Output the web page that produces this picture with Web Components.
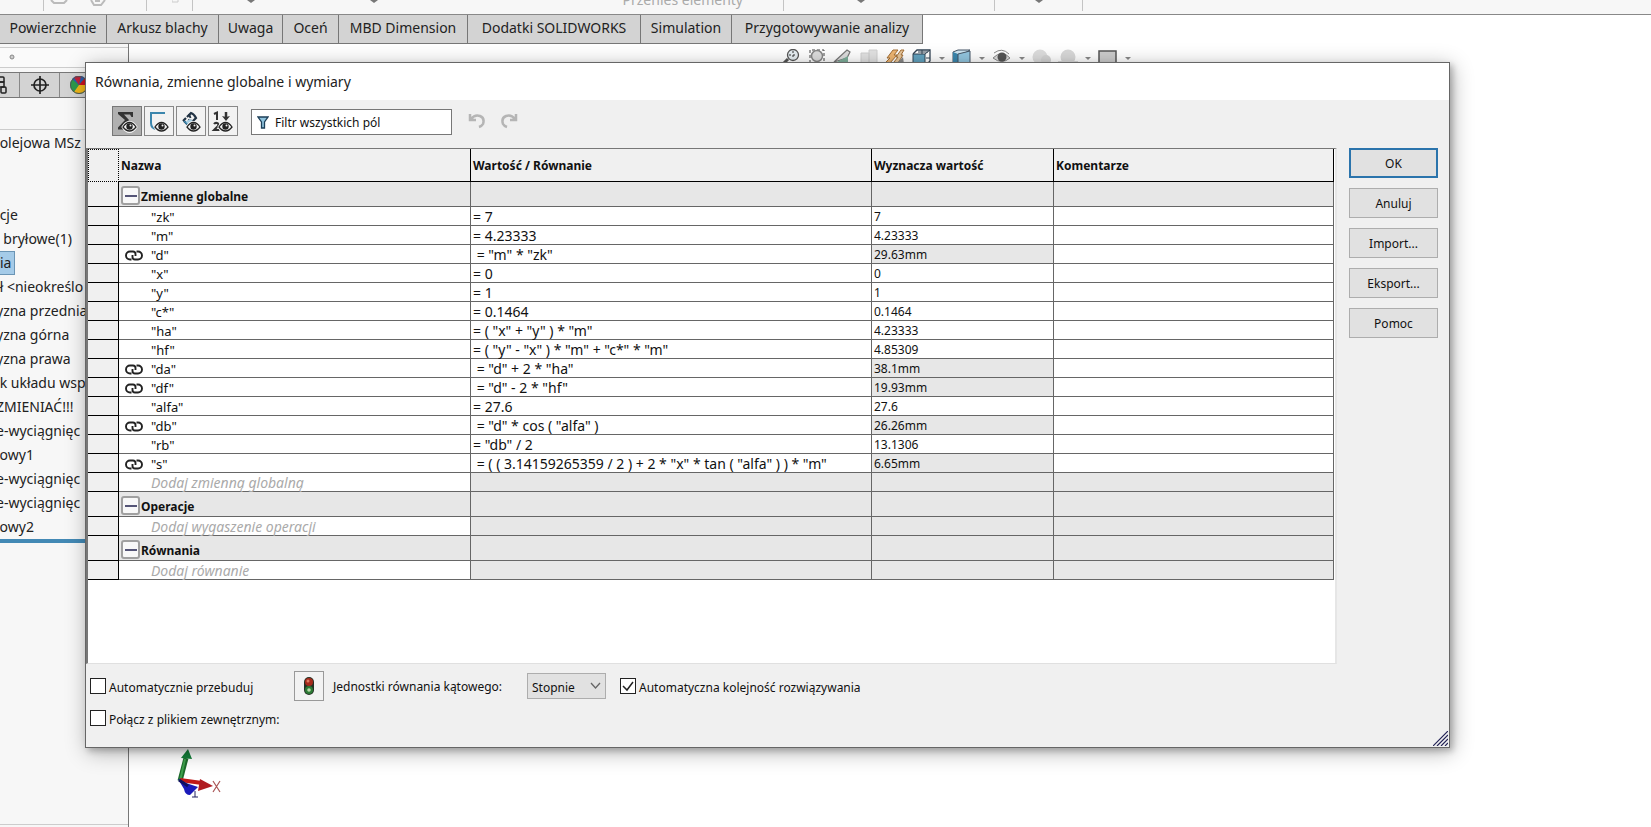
<!DOCTYPE html>
<html lang="pl">
<head>
<meta charset="utf-8">
<title>Równania, zmienne globalne i wymiary</title>
<style>
html,body{margin:0;height:100%}
body{font-family:"Noto Sans","Open Sans",sans-serif;font-size:12px;color:#111;background:#fff;overflow:hidden}
</style>
</head>
<body>
<cad-app></cad-app>
<script>
const define = (name, html, setup) => {
  const tpl = document.createElement('template');
  tpl.innerHTML = html;
  customElements.define(name, class extends HTMLElement {
    constructor() {
      super();
      this.attachShadow({mode: 'open'}).append(tpl.content.cloneNode(true));
    }
    connectedCallback() { if (setup) setup(this, this.shadowRoot); }
  });
};

const eye = `<g><path d="M9.500 20q3-5 7-5t7 5q-3 5-7 5t-7-5z" fill="#f4f4f4" stroke="#f4f4f4" stroke-width="2"/><path d="M10 20q3-4.500 6.500-4.500t6.500 4.500q-3 4-6.500 4t-6.500-4z" fill="#f4f4f4" stroke="#222" stroke-width="1.300"/><circle cx="16.500" cy="19.500" r="3.200" fill="#222"/><circle cx="17.500" cy="18.500" r="1" fill="#eee"/></g>`;

/* ---------- background application ---------- */
define('cad-ribbon', `
<style>
:host{display:flex;height:14px;background:#f7f7f7;border-bottom:1px solid #888;overflow:hidden}
div{box-sizing:border-box;height:11px;border-right:1px solid #c4c4c4;display:flex;align-items:flex-start}
.a{width:44px}.b{width:103px;padding-left:6px;gap:22px}.c{width:46px;justify-content:flex-end;padding-right:12px}.d{width:591px;padding:0 40px 0 54px;gap:115px}.e{width:211px;justify-content:center;padding-right:56px}.f{width:88px;justify-content:center}
svg{flex:none}
span{color:#aaa;font-size:14px;line-height:20px;align-self:flex-end;margin:0 0 1px auto}
</style>
<div class="a"></div>
<div class="b"><svg width="18" height="5"><path d="M1 0l3 3h10l3-3" fill="none" stroke="#bbb" stroke-width="2"/></svg><svg width="16" height="8"><path d="M1 0l3 5h7l4-5M5 1h5" fill="none" stroke="#bbb" stroke-width="2"/></svg></div>
<div class="c"><svg width="8" height="3"><path d="M0 0v2h6V0" fill="none" stroke="#ccc"/></svg></div>
<div class="d"><svg width="8" height="4"><path d="M0 0h8L4 3z" fill="#777"/></svg><svg width="8" height="4"><path d="M0 0h8L4 3z" fill="#777"/></svg><span>Przenieś elementy</span></div>
<div class="e"><svg width="8" height="4"><path d="M0 0h8L4 3z" fill="#777"/></svg></div>
<div class="f"><svg width="8" height="4"><path d="M0 0h8L4 3z" fill="#777"/></svg></div>`);

define('cad-tabs', `
<style>
:host{display:flex;height:28px;width:max-content;background:#d3d3d3;border-bottom:1px solid #777}
button{box-sizing:border-box;font:inherit;font-size:14px;line-height:26px;color:#222;background:none;border:0;border-right:1px solid #777;padding:0 0 2px;white-space:nowrap}
</style>
<button style="width:107px">Powierzchnie</button><button style="width:112px">Arkusz blachy</button><button style="width:64px">Uwaga</button><button style="width:56px">Oceń</button><button style="width:129px">MBD Dimension</button><button style="width:173px">Dodatki SOLIDWORKS</button><button style="width:91px">Simulation</button><button style="width:191px">Przygotowywanie analizy</button>`);

define('cad-tree', `
<style>
:host{display:flex;flex-direction:column;box-sizing:border-box;width:129px;background:#f7f7f7;border-right:1px solid #777;overflow:hidden}
.grip{height:19px;margin-top:3px;border:1px solid #ccc;border-width:1px 0;background:#fafafa}
.grip svg{display:block;margin:6px 0 0 9px}
.tabs{display:flex;height:24px;margin-top:4px;background:#d3d3d3;border:1px solid #777;border-width:1px 0}
.tabs button{box-sizing:border-box;width:40px;padding:0;border:0;border-right:1px solid #888;background:none;display:flex;align-items:center;justify-content:center}
.tabs button:first-child{width:20px;justify-content:flex-start}
.bar{height:31px;border-bottom:1px solid #ccc}
ul{list-style:none;margin:1px 0 0 -4px;padding:0;font-size:14px;color:#222}
li{height:24px;line-height:24px;white-space:pre}
.sel span{display:inline-block;box-sizing:border-box;background:#a5cbe8;border:1px solid #6b95b5;line-height:22px;padding:0 3px}
.end{height:4px;background:#4389b5}
.foot{margin-top:auto;height:2px;border-top:1px solid #ccc}
</style>
<div class="grip"><svg width="7" height="7"><circle cx="3" cy="3" r="2" fill="#ccc" stroke="#888"/></svg></div>
<div class="tabs"><button aria-label="Konfiguracje"><svg width="8" height="18"><g fill="none" stroke="#222" stroke-width="1.500"><rect x="-3" y="1" width="7" height="5" rx="1"/><rect x="-3" y="6" width="7" height="5"/><rect x="1" y="11" width="5" height="6" rx="1"/></g></svg></button><button aria-label="DimXpert"><svg width="18" height="18"><g fill="none" stroke="#222" stroke-width="1.700"><circle cx="9" cy="9" r="6"/><path d="M9 0v18M0 9h18"/></g></svg></button><button aria-label="Wygląd"><svg width="19" height="19"><circle cx="9" cy="9" r="9" fill="#2d9a4c"/><path d="M9 9L2 3A9 9 0 0 1 15 2z" fill="#2a5bb0"/><path d="M9 9L15 2A9 9 0 0 1 18 9z" fill="#c12"/><path d="M9 9L4 1.500A9 9 0 0 1 11 0z" fill="#c2213a"/><path d="M9 9h9a9 9 0 0 1-14 7z" fill="#f0b81a"/><circle cx="9" cy="9" r="8.500" fill="none" stroke="#555"/></svg></button></div>
<div class="bar"></div>
<ul></ul><div class="end"></div><div class="foot"></div>`, (el, root) => {
  const rows = [' olejowa MSz', '', '', ' cje', '  bryłowe(1)', '*ia', ' ł <nieokreślo', 'yzna przednia', 'yzna górna', 'yzna prawa', ' k układu wsp', 'ZMIENIAĆ!!!', 'e-wyciągnięc', 'łowy1', 'e-wyciągnięc', 'e-wyciągnięc', 'łowy2'];
  const ul = root.querySelector('ul');
  for (const r of rows) {
    const li = document.createElement('li');
    if (r[0] === '*') { li.className = 'sel'; const s = document.createElement('span'); s.textContent = r.slice(1); li.append(s); }
    else li.textContent = r;
    ul.append(li);
  }
});

define('cad-view-toolbar', `
<style>
:host{display:flex;align-items:flex-start;padding:5px 0 0 650px}
svg{flex:none;width:26px;height:18px}
svg.d{width:14px}
</style>
<svg viewBox="0 0 26 18"><circle cx="14" cy="6" r="5.500" fill="#e6eef2" stroke="#555" stroke-width="1.300"/><path d="M9 10l-5 5" stroke="#555" stroke-width="3"/><path d="M14 2v8M10 6h8" stroke="#333" stroke-dasharray="2 2"/></svg>
<svg viewBox="0 0 26 18"><path d="M5 14V1h14v13" fill="none" stroke="#444" stroke-dasharray="3 2"/><circle cx="12" cy="7" r="5.500" fill="#ddd" stroke="#888" stroke-width="1.500"/></svg>
<svg viewBox="0 0 26 18"><path d="M3 13L16 1l3 2-3 6z" fill="#ddd" stroke="#777" stroke-width="1.200"/><path d="M6 13l11-6v6z" fill="#7fb09c"/></svg>
<svg viewBox="0 0 26 18"><path d="M4 4h8v10H4zM12 1h8v13h-8z" fill="#e2e2e2" stroke="#d0d0d0"/></svg>
<svg viewBox="0 0 26 18"><path d="M3 13l4-4H4l6-8h5l-4 5h3l-7 8z" fill="#efb672" stroke="#a36e35"/><path d="M11 13l4-5h-2l5-7h3l-3 5h2l-5 8z" fill="#e8c79c" stroke="#a36e35"/><path d="M14 14l6-6 1 7z" fill="#888"/></svg>
<svg viewBox="0 0 26 18"><path d="M4 5l4-4h13v11l-4 4" fill="#fff" stroke="#345" stroke-width="1.300"/><path d="M4 5h12v10H4z" fill="#63a3c0" stroke="#345"/><path d="M16 5l5-4M13 1v4M9 3h10M17 9h4" stroke="#345"/></svg>
<svg class="d" viewBox="0 0 14 18"><path d="M4 8h6l-3 3z" fill="#888"/></svg>
<svg viewBox="0 0 26 18"><path d="M4 3l5-2h12l-5 3v11H4z" fill="#cfe6f2" stroke="#456"/><path d="M4 3l5 2v10H4z" fill="#3b87ae"/><path d="M9 5l12-3v13H9z" fill="#93c6e0" stroke="#456"/></svg>
<svg class="d" viewBox="0 0 14 18"><path d="M4 8h6l-3 3z" fill="#888"/></svg>
<svg viewBox="0 0 26 18"><path d="M4 9q9-9 17 0-8 7-17 0z" fill="#ddd" stroke="#888"/><circle cx="13" cy="8" r="4.500" fill="#555"/><path d="M5 4q8-6 15 1" fill="none" stroke="#888"/></svg>
<svg class="d" viewBox="0 0 14 18"><path d="M4 8h6l-3 3z" fill="#888"/></svg>
<svg viewBox="0 0 26 18"><circle cx="11" cy="8" r="7.500" fill="#ddd"/><circle cx="17" cy="11" r="5" fill="#d4d4d4"/></svg>
<svg viewBox="0 0 26 18"><circle cx="13" cy="8" r="7.500" fill="#d8d8d8"/><path d="M3 12h20v6H3z" fill="#dcdcdc"/></svg>
<svg class="d" viewBox="0 0 14 18"><path d="M4 8h6l-3 3z" fill="#888"/></svg>
<svg viewBox="0 0 26 18"><path d="M4 2h17v12H4z" fill="#ccc" stroke="#555" stroke-width="1.500"/></svg>
<svg class="d" viewBox="0 0 14 18"><path d="M4 8h6l-3 3z" fill="#888"/></svg>`);

define('cad-triad', `
<style>:host{display:block;margin:auto 0 24px 46px;height:54px}svg{display:block}</style>
<svg width="52" height="54"><path d="M5 32L11 9" stroke="#1d6b2b" stroke-width="5"/><path d="M5 32L10 10" stroke="#3ea04c" stroke-width="2"/><path d="M6 9L13 0l4 10z" fill="#15803a"/><path d="M5 31l22 3" stroke="#c01818" stroke-width="4"/><path d="M25 30l13 7-15 5z" fill="#b01c22"/><path d="M3 30l8 4 12 4-8 8q-5 0-6-6z" fill="#1a1aba"/><path d="M4 31l9 6" stroke="#101060" stroke-width="3"/><path d="M20 42v6M17 48h6" fill="none" stroke="#222260"/><path d="M38 32l7 11M45 32l-7 11" stroke="#a55" stroke-width="1.200"/></svg>`);

define('cad-app', `
<style>
:host{display:flex;flex-direction:column;height:100vh;position:relative}
.work{flex:1;display:flex;min-height:0}
.view{flex:1;display:flex;flex-direction:column;min-width:0}
eq-dialog{position:absolute;left:85px;right:201px;top:62px;bottom:79px}
</style>
<cad-ribbon></cad-ribbon><cad-tabs></cad-tabs>
<div class="work"><cad-tree></cad-tree><div class="view"><cad-view-toolbar></cad-view-toolbar><cad-triad></cad-triad></div></div>
<eq-dialog><span slot="title">Równania, zmienne globalne i wymiary</span>
<eq-toolbar slot="toolbar"></eq-toolbar><eq-table slot="table"></eq-table><eq-actions slot="actions"></eq-actions><eq-options slot="options"></eq-options></eq-dialog>`);

/* ---------- dialog ---------- */
define('eq-dialog', `
<style>
:host{display:flex;flex-direction:column;box-sizing:border-box;background:#f0f0f0;border:1px solid #666;box-shadow:3px 3px 6px rgba(0,0,0,.22),2px 4px 20px rgba(0,0,0,.3)}
header{height:37px;line-height:38px;padding-left:9px;background:#fff;font-size:14px;color:#222}
.mid{flex:1;display:grid;grid-template-columns:1fr 89px;column-gap:12px;padding-right:11px;min-height:0}
footer{display:flex;justify-content:space-between}
.grip{align-self:flex-end;display:block;margin:0 1px 1px 0}
</style>
<header><slot name="title"></slot></header>
<slot name="toolbar"></slot>
<div class="mid"><slot name="table"></slot><slot name="actions"></slot></div>
<footer><slot name="options"></slot><svg class="grip" width="15" height="15"><path d="M0 15L15 0M4 15L15 4M8 15l7-7M12 15l3-3" stroke="#225" stroke-width="1.200"/></svg></footer>`);

define('eq-toolbar', `
<style>
:host{display:flex;height:42px;padding:6px 0 0 26px;gap:2px}
button{box-sizing:border-box;width:30px;height:30px;padding:0;border:1px solid #888;background:#f2f2f2;display:block}
button.on{background:#b0b0b0;border-color:#777}
button svg{display:block}
.filter{box-sizing:border-box;display:flex;align-items:center;width:201px;height:26px;margin:3px 14px 0 11px;padding-left:5px;border:1px solid #777;background:#fff}
input{flex:1;min-width:0;border:0;padding:0 0 0 6px;outline:0;font:inherit;color:#111;background:none}
button.flat{border:0;background:none}
</style>
<button class="on" aria-label="Widok równań"><svg width="28" height="28"><path d="M5 5h15v5h-1.500l-1.500-2.500h-6l5 5.500-6 6.500h6v3H5v-2l7-7.500-7-6z" fill="#333"/>${eye}</svg></button>
<button aria-label="Widok równań szkicu"><svg width="28" height="28"><path d="M20 6H6v10q0 6 6 6" fill="none" stroke="#3b86ad" stroke-width="2"/>${eye}</svg></button>
<button aria-label="Widok wymiarów"><svg width="28" height="28"><path d="M6 14l3-3M10 10l4-4q3 1 5 5l-4 4M7 14l6 6" stroke="#234" stroke-width="2.200" fill="none"/><path d="M12 7l1.500 4M15 14l-4-1" stroke="#234" stroke-width="2" fill="none"/><path d="M8 15l5-3 3 2-4 4z" fill="#a9cfe2"/><path d="M7 14l6 6" stroke="#3b86ad" stroke-width="1.500"/>${eye}</svg></button>
<button aria-label="Widok uporządkowany"><svg width="28" height="28"><path d="M5 7l3-1.500V13M5 17q1-1.500 3-1 2 .5 1 3l-4 4h5.500" fill="none" stroke="#333" stroke-width="2"/><path d="M17 5v6" stroke="#333" stroke-width="2.500"/><path d="M13 9l4 1 4-1-4 5z" fill="#333"/>${eye}</svg></button>
<label class="filter"><svg width="12" height="13"><path d="M1 1h10L7.500 6v6h-3V6z" fill="#8fc3dd" stroke="#1d3f58" stroke-width="1.300"/></svg><input aria-label="Filtr" value="Filtr wszystkich pól"></label>
<button class="flat" aria-label="Cofnij"><svg width="18" height="30"><path d="M2 8v6h6M3 13q4-5 9-3t3 8q-1 2-4 3" fill="none" stroke="#b5b5b5" stroke-width="2.500"/></svg></button>
<button class="flat" aria-label="Ponów"><svg width="18" height="30"><path d="M16 8v6h-6M15 13q-4-5-9-3t-3 8q1 2 4 3" fill="none" stroke="#b5b5b5" stroke-width="2.500"/></svg></button>`);

define('eq-table', `
<style>
:host{display:block;box-sizing:border-box;min-width:0;background:#fff;border:1px solid #777;border-left-width:2px;border-right:2px solid #e6e6e6;border-bottom:1px solid #e0e0e0;padding-right:1px}
table{width:100%;table-layout:fixed;border-collapse:separate;border-spacing:0}
th,td{box-sizing:border-box;height:19px;padding:2px 0 0 2px;border-right:1px solid #666;border-bottom:1px solid #666;text-align:left;white-space:nowrap;font-weight:400;line-height:16px}
thead th{height:33px;font-weight:700;background:#f0f0f0;border-color:#000}
tbody th{background:#f0f0f0;border-color:#000;padding:0}
thead th:first-child{border:1px dotted #000}
.c-mark{width:31px}.c-name{width:352px}.c-eq{width:401px}.c-val{width:182px}
.eq{font-size:14px;white-space:pre}
.gray{background:#e7e7e7}
tr.group>*{height:25px;padding-top:0}
.group div{display:flex;align-items:flex-end;height:24px;line-height:18px;font-weight:700}
.group button{box-sizing:border-box;width:19px;height:19px;margin:0 1px 1px 0;padding:0;border:2px solid #a0a0a0;border-radius:3px;background:#f8f8f8;display:flex;align-items:center;justify-content:center}
.group button::before{content:"";width:12px;height:2px;background:#557}
.name{display:grid;grid-template-columns:30px 1fr;align-items:center;font-size:13px}
.name svg{margin-left:4px}
.add{font-size:14px;font-style:italic;color:#aaa}
.mark{display:flex}
</style>
<table><colgroup><col class="c-mark"><col class="c-name"><col class="c-eq"><col class="c-val"><col></colgroup>
<thead><tr><th></th><th scope="col">Nazwa</th><th scope="col">Wartość / Równanie</th><th scope="col">Wyznacza wartość</th><th scope="col">Komentarze</th></tr></thead><tbody></tbody></table>`, (el, root) => {
  const link = '<svg width="18" height="11"><path d="M10.500 6V4q0-2.500-2.500-2.500H5a4 4 0 0 0 0 8h1.500M7.500 5v2q0 2.500 2.500 2.500h3a4 4 0 0 0 0-8h-1.500" fill="none" stroke="#222" stroke-width="1.900"/></svg>';
  const g = t => `<tr class="group"><th></th><td class="gray"><div><button aria-label="Zwiń"></button>${t}</div></td><td class="gray"></td><td class="gray"></td><td class="gray"></td></tr>`;
  const add = t => `<tr><th></th><td><div class="name add"><span></span>${t}</div></td><td class="gray"></td><td class="gray"></td><td class="gray"></td></tr>`;
  const r = (n, e, v, l) => `<tr><th></th><td><div class="name"><span class="mark">${l ? link : ''}</span>"${n}"</div></td><td class="eq">${l ? ' ' : ''}= ${e}</td><td${l ? ' class="gray"' : ''}>${v}</td><td></td></tr>`;
  root.querySelector('tbody').innerHTML = g('Zmienne globalne') +
    r('zk', '7', '7') + r('m', '4.23333', '4.23333') + r('d', '"m" * "zk"', '29.63mm', 1) + r('x', '0', '0') + r('y', '1', '1') + r('c*', '0.1464', '0.1464') +
    r('ha', '( "x" + "y" ) * "m"', '4.23333') + r('hf', '( "y" - "x" ) * "m" + "c*" * "m"', '4.85309') + r('da', '"d" + 2 * "ha"', '38.1mm', 1) + r('df', '"d" - 2 * "hf"', '19.93mm', 1) +
    r('alfa', '27.6', '27.6') + r('db', '"d" * cos ( "alfa" )', '26.26mm', 1) + r('rb', '"db" / 2', '13.1306') + r('s', '( ( 3.14159265359 / 2 ) + 2 * "x" * tan ( "alfa" ) ) * "m"', '6.65mm', 1) +
    add('Dodaj zmienną globalną') + g('Operacje') + add('Dodaj wygaszenie operacji') + g('Równania') + add('Dodaj równanie');
});

define('eq-actions', `
<style>
:host{display:flex;flex-direction:column;gap:10px}
button{box-sizing:border-box;height:30px;padding:0;font:inherit;color:#111;background:#e1e1e1;border:1px solid #adadad}
.main{border:2px solid #2b74ac}
</style>
<button class="main">OK</button><button>Anuluj</button><button>Import...</button><button>Eksport...</button><button>Pomoc</button>`);

define('eq-options', `
<style>
:host{display:block;height:77px;padding:6px 0 0 4px}
.row{display:flex;align-items:center;height:32px}
label{display:flex;align-items:center;gap:3px;white-space:nowrap}
label span{padding-top:3px}
.first{width:204px}.unit{width:194px;margin-left:9px}
input{appearance:none;box-sizing:border-box;width:16px;height:16px;margin:0;border:1px solid #222;background:#fff;flex:none}
input:checked{background:#fff url('data:image/svg+xml,<svg xmlns="http://www.w3.org/2000/svg" width="14" height="14"><path d="M2 7l4 4 6-8" fill="none" stroke="%23222" stroke-width="1.500"/></svg>')}
button{box-sizing:border-box;width:30px;height:30px;padding:0;border:1px solid #999;background:#f2f2f2;display:flex;align-items:center;justify-content:center}
.pick{position:relative;margin-right:14px}
select{appearance:none;display:block;box-sizing:border-box;width:79px;height:26px;padding:3px 0 0 4px;font:inherit;color:#111;background:#e1e1e1;border:1px solid #adadad;border-radius:0}
.pick svg{position:absolute;right:5px;top:9px;pointer-events:none}
</style>
<div class="row"><label class="first"><input type="checkbox"><span>Automatycznie przebuduj</span></label>
<button aria-label="Przebuduj"><svg width="12" height="20"><rect x="1" y="1" width="10" height="18" rx="5" fill="#243024"/><circle cx="6" cy="6" r="4" fill="#a52a1c"/><circle cx="5" cy="5" r="1.500" fill="#e07a60"/><circle cx="6" cy="14" r="4" fill="#2c7a35"/><circle cx="6" cy="14" r="1.800" fill="#b9d9a8"/></svg></button>
<label class="unit" for="unit">Jednostki równania kątowego:</label>
<span class="pick"><select id="unit"><option>Stopnie</option></select><svg width="11" height="8"><path d="M1 1l4.500 5L10 1" fill="none" stroke="#666" stroke-width="1.300"/></svg></span>
<label><input type="checkbox" checked><span>Automatyczna kolejność rozwiązywania</span></label></div>
<div class="row"><label><input type="checkbox"><span>Połącz z plikiem zewnętrznym:</span></label></div>`);
</script>
</body>
</html>
